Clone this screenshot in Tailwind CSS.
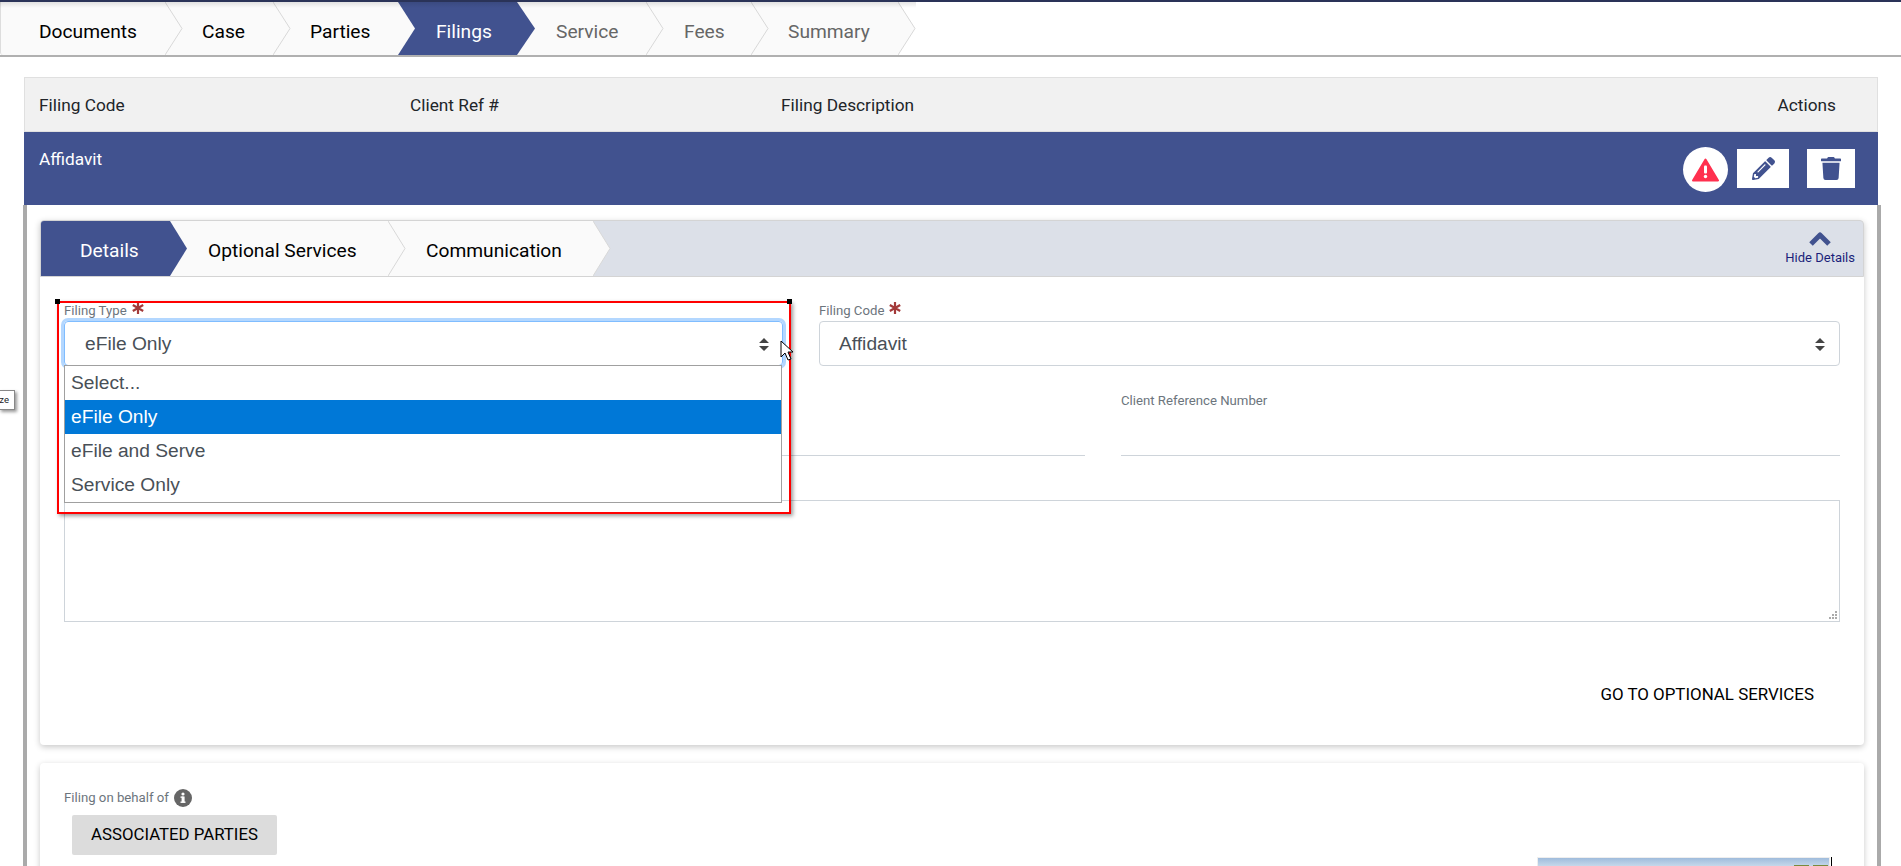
<!DOCTYPE html>
<html><head><meta charset="utf-8">
<script src="https://cdn.jsdelivr.net/npm/@tailwindcss/browser@4"></script>
</head>
<body class="relative w-[1901px] h-[866px] overflow-hidden bg-white font-[Roboto] text-[#212529]">
<div class="h-[2px] bg-[#2a3358]"></div>
<nav class="relative flex h-[55px] w-[1901px] border-b-2 border-[#b0b0b0] text-[19.2px] text-black">
  <div class="pointer-events-none absolute left-0 top-0 z-20 h-[6px] w-[916px] bg-gradient-to-b from-black/10 to-transparent"></div>
  <div class="relative w-[165px] rounded-bl-[3px] border-l border-[#ddd] bg-[#fafafa] pl-[38px] pt-[7px] leading-[46px]">Documents<svg class="absolute left-full top-0 z-10" width="18" height="53"><path d="M0 0L17 26.5L0 53" fill="#fafafa" stroke="#d8d8d8"/></svg></div>
  <div class="relative w-[108px] bg-[#fafafa] pl-[37px] pt-[7px] leading-[46px]">Case<svg class="absolute left-full top-0 z-10" width="18" height="53"><path d="M0 0L17 26.5L0 53" fill="#fafafa" stroke="#d8d8d8"/></svg></div>
  <div class="relative w-[125px] bg-[#fafafa] pl-[37px] pt-[7px] leading-[46px]">Parties</div>
  <div class="relative w-[119px] bg-[#41528f] pl-[38px] pt-[7px] leading-[46px] text-white">Filings<svg class="absolute left-0 top-0" width="18" height="53"><path d="M0 0L17 26.5L0 53Z" fill="#fafafa"/></svg><svg class="absolute left-full top-0 z-10" width="18" height="53"><path d="M0 0L18 26.5L0 53Z" fill="#41528f"/></svg></div>
  <div class="relative w-[129px] bg-[#fafafa] pl-[39px] pt-[7px] leading-[46px] text-[#666]">Service<svg class="absolute left-full top-0 z-10" width="18" height="53"><path d="M0 0L17 26.5L0 53" fill="#fafafa" stroke="#d8d8d8"/></svg></div>
  <div class="relative w-[105px] bg-[#fafafa] pl-[38px] pt-[7px] leading-[46px] text-[#666]">Fees<svg class="absolute left-full top-0 z-10" width="18" height="53"><path d="M0 0L17 26.5L0 53" fill="#fafafa" stroke="#d8d8d8"/></svg></div>
  <div class="relative w-[147px] bg-[#fafafa] pl-[37px] pt-[7px] leading-[46px] text-[#666]">Summary<svg class="absolute left-full top-0 z-10" width="18" height="53"><path d="M0 0L17 26.5L0 53" fill="#fafafa" stroke="#d8d8d8"/></svg></div>
</nav>
<main class="ml-[24px] mt-[20px] w-[1854px] ">
  <div class="flex h-[55px] items-center justify-between border border-[#e0e0e0] bg-[#f1f1f1] pl-[14px] pr-[41px] pt-[1px] text-[17.28px] leading-[24px]">
    <div class="flex"><span class="w-[371px]">Filing Code</span><span class="w-[371px]">Client Ref #</span><span>Filing Description</span></div>
    <span>Actions</span>
  </div>
  <div class="flex h-[73px] justify-between bg-[#41528f] pl-[15px] pr-[23px] text-white">
    <span class="pt-[13px] text-[17.28px] leading-[28px]">Affidavit</span>
    <div class="flex items-start pt-[17px]">
      <button class="-mt-[2px] mr-[9px] flex h-[45px] w-[45px] items-center justify-center rounded-full bg-white">
        <svg width="27" height="24" viewBox="0 0 27 24"><path d="M13.5 1.5L26 22.5H1Z" fill="#ff304f" stroke="#ff304f" stroke-width="2" stroke-linejoin="round"/><rect x="12" y="7.5" width="3" height="8" rx="1" fill="#fff"/><circle cx="13.5" cy="18.5" r="1.7" fill="#fff"/></svg>
      </button>
      <button class="mr-[18px] flex h-[39px] w-[52px] items-center justify-center bg-white">
        <svg width="23" height="23" viewBox="0 0 512 512" fill="#41528f"><path d="M497.9 142.1l-46.1 46.1c-4.7 4.7-12.3 4.7-17 0l-111-111c-4.7-4.7-4.7-12.3 0-17l46.1-46.1c18.7-18.7 49.1-18.7 67.9 0l60.1 60.1c18.8 18.7 18.8 49.1 0 67.9zM284.2 99.8L21.6 362.4.4 483.9c-2.9 16.4 11.4 30.6 27.8 27.8l121.5-21.3 262.6-262.6c4.7-4.7 4.7-12.3 0-17l-111-111c-4.8-4.7-12.4-4.7-17.1 0zM124.1 339.9c-5.5-5.5-5.5-14.3 0-19.8l154-154c5.5-5.5 14.3-5.5 19.8 0s5.5 14.3 0 19.8l-154 154c-5.5 5.5-14.3 5.5-19.8 0zM88 424h48v36.3l-64.5 11.3-31.1-31.1L51.7 376H88v48z"/></svg>
      </button>
      <button class="flex h-[39px] w-[48px] items-center justify-center bg-white">
        <svg width="20" height="23" viewBox="0 0 448 512" fill="#41528f"><path d="M432 32H312l-9.4-18.7A24 24 0 0 0 281.1 0H166.8a23.7 23.7 0 0 0-21.4 13.3L136 32H16A16 16 0 0 0 0 48v32a16 16 0 0 0 16 16h416a16 16 0 0 0 16-16V48a16 16 0 0 0-16-16zM53.2 467a48 48 0 0 0 47.9 45h245.8a48 48 0 0 0 47.9-45L416 128H32z"/></svg>
      </button>
    </div>
  </div>
  <div class="relative -ml-[1px] w-[1858px] border-x-[4px] border-[#aaa] px-[13px] pt-[15px]">
    <section class="relative h-[525px] w-[1824px] rounded-[4px] bg-white shadow-[0_2px_6px_rgba(0,0,0,0.22)]">
      <div class="flex h-[57px] items-stretch justify-between rounded-t-[4px] border border-[#d4d4d4] bg-[#dce0e8]">
        <div class="flex text-[19.2px]">
          <div class="relative w-[129px] rounded-tl-[3px] bg-[#41528f] pl-[39px] pt-[4px] leading-[51px] text-white">Details<svg class="absolute left-full top-0 z-20" width="18" height="55"><path d="M0 0L17 27.5L0 55Z" fill="#41528f"/></svg></div>
          <div class="relative w-[218px] bg-[#fafafa] pl-[38px] pt-[4px] leading-[51px] text-black">Optional Services<svg class="absolute left-full top-0 z-10" width="18" height="55"><path d="M0 0L17 27.5L0 55" fill="#fafafa" stroke="#d8d8d8"/></svg></div>
          <div class="relative w-[205px] bg-[#fafafa] pl-[38px] pt-[4px] leading-[51px] text-black">Communication<svg class="absolute left-full top-0 z-10" width="18" height="55"><path d="M0 0L17 27.5L0 55" fill="#fafafa" stroke="#d8d8d8"/></svg></div>
        </div>
        <div class="mr-[8px] flex flex-col items-center pt-[10px] text-[13px] leading-[16px] text-[#1b1f7a]">
          <svg width="24" height="16" viewBox="0 0 24 16"><path d="M3 13L12 4L21 13" fill="none" stroke="#41528f" stroke-width="5" stroke-linejoin="round"/></svg>
          <span class="mt-[3px]">Hide Details</span>
        </div>
      </div>
      <div class="px-[24px] pt-[23px]">
        <div class="flex gap-[36px]">
          <div class="w-[719px]">
            <label class="flex h-[21px] items-center text-[13.2px] text-[#6c757d]">Filing Type
              <svg class="ml-[5px] -mt-[6px]" width="12" height="12" viewBox="0 0 12 12" stroke="#a33a3a" stroke-width="2.2"><path d="M6 0V12M0.8 3L11.2 9M11.2 3L0.8 9"/></svg>
            </label>
            <div class="flex h-[45px] items-center justify-between rounded-[4px] border border-[#80bdff] pl-[20px] pr-[13px] pt-[1px] font-['Liberation_Sans'] text-[19.2px] text-[#495057] shadow-[0_0_0_3px_#b3d7ff]">eFile Only
              <svg width="10" height="13" viewBox="0 0 10 13" fill="#444"><path d="M5 0L10 5H0ZM5 13L10 8H0Z"/></svg>
            </div>
          </div>
          <div class="w-[1021px]">
            <label class="flex h-[21px] items-center text-[13.2px] text-[#6c757d]">Filing Code
              <svg class="ml-[5px] -mt-[6px]" width="12" height="12" viewBox="0 0 12 12" stroke="#a33a3a" stroke-width="2.2"><path d="M6 0V12M0.8 3L11.2 9M11.2 3L0.8 9"/></svg>
            </label>
            <div class="flex h-[45px] items-center justify-between rounded-[4px] border border-[#ced4da] pl-[19px] pr-[14px] pt-[1px] font-['Liberation_Sans'] text-[19.2px] text-[#495057]">Affidavit
              <svg width="10" height="13" viewBox="0 0 10 13" fill="#444"><path d="M5 0L10 5H0ZM5 13L10 8H0Z"/></svg>
            </div>
          </div>
        </div>
        <div class="mt-[27px] flex gap-[36px]">
          <div class="h-[63px] w-[1021px] border-b border-[#ced4da]"></div>
          <div class="h-[63px] w-[719px] border-b border-[#ced4da]"><label class="block text-[13.2px] leading-[16px] text-[#6c757d]">Client Reference Number</label></div>
        </div>
        <div class="relative mt-[44px] h-[122px] w-[1776px] border border-[#ced4da]">
          <svg class="absolute bottom-[1px] right-[1px]" width="9" height="9" fill="#aaa"><rect x="6" y="0" width="2" height="2"/><rect x="3" y="3" width="2" height="2"/><rect x="6" y="3" width="2" height="2"/><rect x="0" y="6" width="2" height="2"/><rect x="3" y="6" width="2" height="2"/><rect x="6" y="6" width="2" height="2"/></svg>
        </div>
        <div class="mt-[60px] flex justify-end pr-[26px] text-[16.9px] leading-[24px] text-black">GO TO OPTIONAL SERVICES</div>
      </div>
    </section>
    <section class="mt-[18px] h-[120px] w-[1824px] rounded-[4px] bg-white pl-[24px] pt-[25px] shadow-[0_2px_6px_rgba(0,0,0,0.22)]">
      <div class="flex h-[20px] items-center text-[13.2px] text-[#6c757d]">Filing on behalf of
        <svg class="ml-[5px]" width="18" height="18" viewBox="0 0 18 18"><circle cx="9" cy="9" r="9" fill="#666"/><rect x="7.6" y="7.5" width="3" height="6" fill="#fff"/><rect x="6.5" y="12.5" width="5" height="1.4" fill="#fff"/><rect x="6.5" y="7.5" width="3" height="1.3" fill="#fff"/><circle cx="9" cy="5" r="1.6" fill="#fff"/></svg>
      </div>
      <div class="ml-[8px] mt-[7px] flex h-[40px] w-[205px] items-center justify-center rounded-[2px] bg-[#dcdcdc] text-[16.8px] text-black">ASSOCIATED PARTIES</div>
    </section>
    <div class="absolute left-[1510px] top-[652px] h-[10px] w-[293px] border border-[#eee] bg-gradient-to-b from-[#9fbcdc] to-[#c5d8ea]"></div>
    <div class="absolute left-[1767px] top-[660px] h-[2px] w-[15px] bg-[#7a8a3c]"></div>
    <div class="absolute left-[1786px] top-[660px] h-[2px] w-[15px] bg-[#7a8a3c]"></div>
    <div class="absolute left-[1804px] top-[652px] h-[10px] w-[1px] bg-black"></div>
  </div>
</main>

<!-- dropdown menu -->
<ul class="absolute left-[64px] top-[365px] z-30 w-[718px] border border-[#a0a0a0] bg-white font-['Liberation_Sans'] text-[19.2px] leading-[34px] text-[#495057]">
  <li class="pl-[6px]">Select...</li>
  <li class="bg-[#0078d7] pl-[6px] text-white">eFile Only</li>
  <li class="pl-[6px]">eFile and Serve</li>
  <li class="pl-[6px]">Service Only</li>
</ul>
<!-- annotation -->
<div class="absolute left-[57px] top-[301px] z-40 h-[213px] w-[734px] border-2 border-[#f00] shadow-[2px_2px_4px_rgba(0,0,0,0.4)]"></div>
<div class="absolute left-[55px] top-[299px] z-50 h-[5px] w-[5px] bg-black"></div>
<div class="absolute left-[787px] top-[299px] z-50 h-[5px] w-[5px] bg-black"></div>
<svg class="absolute left-[780px] top-[340px] z-50" width="14" height="22" viewBox="0 0 14 22"><path d="M1 1V17L5 13L8 20L11 19L8 12H13Z" fill="#fff" stroke="#000"/></svg>
<div class="absolute -left-[1px] top-[390px] z-30 flex h-[20px] w-[16px] items-center justify-end border border-[#888] bg-white pr-[5px] text-[9.5px] shadow-[2px_2px_3px_rgba(0,0,0,0.4)]">ze</div>
</body></html>
